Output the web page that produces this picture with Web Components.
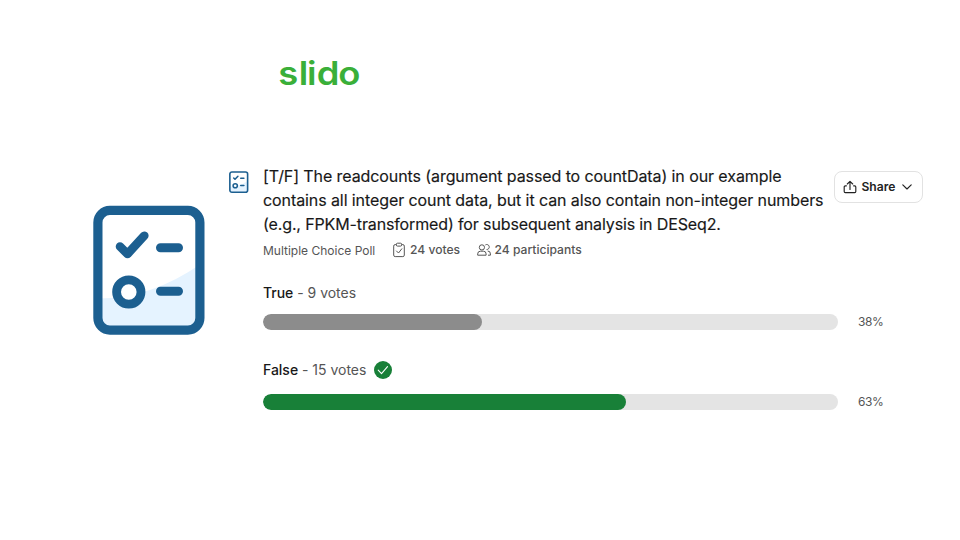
<!DOCTYPE html>
<html lang="en">
<head>
<meta charset="utf-8">
<title>Poll results</title>
<style>
html,body{margin:0;background:#fff}
body{width:960px;height:540px;overflow:hidden;font-family:Inter,"Liberation Sans",sans-serif;color:#181818}
</style>
</head>
<body>
<slide-page>
  <brand-logo slot="logo"></brand-logo>
  <poll-icon slot="art" style="--w:112px;--h:130px"></poll-icon>
  <poll-header slot="head">
    <span>[T/F] The readcounts (argument passed to countData) in our example</span>
    <span slot="l2">contains all integer count data, but it can also contain non-integer numbers</span>
    <span slot="l3">(e.g., FPKM-transformed) for subsequent analysis in DESeq2.</span>
    <poll-meta slot="meta"></poll-meta>
    <share-button slot="action">Share</share-button>
  </poll-header>
  <poll-option votes="9 votes" percent="38%" style="--fill:219px;--c:#8c8c8c">True</poll-option>
  <poll-option votes="15 votes" percent="63%" correct style="--fill:363px;--c:#188038">False</poll-option>
</slide-page>
<script>
const define = (name, html, setup) => customElements.define(name, class extends HTMLElement {
  constructor() {
    super();
    const t = document.createElement('template');
    t.innerHTML = html;
    this.attachShadow({mode: 'open'}).append(t.content.cloneNode(true));
  }
  connectedCallback() { if (setup) setup(this, this.shadowRoot); }
});

define('slide-page', `<style>
:host{display:block;box-sizing:border-box;width:960px;height:540px;background:#fff}
header{height:164px;box-sizing:border-box;padding:54px 0 0 276px}
.body{display:grid;grid-template-columns:136px 1fr;padding-left:93px}
.art{padding-top:41px}
</style>
<header><slot name="logo"></slot></header>
<div class="body"><div class="art"><slot name="art"></slot></div>
<main><slot name="head"></slot><slot></slot></main></div>`);

define('brand-logo', `<style>:host{display:block;height:40px}svg{display:block}</style>
<svg width="90" height="40"><text transform="scale(1.12 1)" x="2.1 20.3 27.8 36.4 55.6" y="31.4" font-size="32.5" font-weight="600" fill="#3aaf39">slido</text></svg>`);

define('poll-icon', `<style>:host{display:block;width:var(--w);height:var(--h)}svg{display:block;width:100%;height:100%}</style>
<svg viewBox="0 -.5 112 130" preserveAspectRatio="none" fill="none" stroke="#1c5f90" stroke-linecap="round" stroke-linejoin="round">
<rect x="5" y="5" width="102" height="120" rx="12" fill="#fff" stroke="none"/>
<path d="M5 93Q58 93 107 59V114a11 11 0 0 1-11 11H16a11 11 0 0 1-11-11Z" fill="#e5f3ff" stroke="none"/>
<rect x="4.9" y="4.9" width="102" height="119.7" rx="12" stroke-width="9.2"/>
<path d="M27 41l7.5 7.5L51.3 30.2" stroke-width="8.6"/>
<path d="M67.5 42.3h18M67.5 85.8h18" stroke-width="9"/>
<circle cx="35.8" cy="86.5" r="12.2" fill="#fff" stroke-width="8.8"/>
</svg>`);

define('poll-header', `<style>
:host{display:flex;height:99px}
.icon{width:34px;padding:7px 0 0 .4px;box-sizing:border-box}
.txt{width:571px}
.title{font-size:16px;line-height:24px;white-space:nowrap;letter-spacing:-.09px;-webkit-text-stroke:.15px #181818}
.title div{height:24px}
.title div:last-child{letter-spacing:-.13px}
.act{padding-top:7px}
</style>
<div class="icon"><poll-icon style="--w:19.5px;--h:22px"></poll-icon></div>
<div class="txt"><div class="title"><div><slot></slot></div><div><slot name="l2"></slot></div><div><slot name="l3"></slot></div></div><slot name="meta"></slot></div>
<div class="act"><slot name="action"></slot></div>`);

define('poll-meta', `<style>
:host{display:flex;align-items:center;height:28px;font-size:12px;color:#555;white-space:nowrap}
.k{width:129px}
.v,.p{display:flex;align-items:center;font-weight:500}
.v{width:84.5px}
svg{width:14px;margin-right:4px;margin-bottom:1px}
b{font-weight:500;font-size:12.1px;margin-bottom:1px}
</style>
<span class="k">Multiple Choice Poll</span>
<span class="v"><svg height="16" viewBox="0 0 14 16" fill="none" stroke="#555" stroke-width="1"><path d="M4.5 2.6H3.2a1.5 1.5 0 0 0-1.5 1.5v9a1.5 1.5 0 0 0 1.5 1.5h7.6a1.5 1.5 0 0 0 1.5-1.5v-9a1.5 1.5 0 0 0-1.5-1.5H9.5"/><rect x="4.3" y="1.2" width="5.4" height="2.9" rx="1.2"/><path d="M4.5 9l2 2 3.3-4.2" stroke-linecap="round"/></svg><b>24 votes</b></span>
<span class="p"><svg height="16" viewBox="0 0 14 16" fill="none" stroke="#555" stroke-width="1" stroke-linejoin="round"><circle cx="4.9" cy="5.4" r="2.6"/><path d="M.7 13.2v-1.3a2.7 2.7 0 0 1 2.7-2.7h3a2.7 2.7 0 0 1 2.7 2.7v1.3ZM8.4 2.9a2.5 2.5 0 1 1 1.2 4.6M10.7 9a2.8 2.8 0 0 1 2.7 2.9v1.3h-2.4"/></svg><b>24 participants</b></span>`);

define('share-button', `<style>
:host{display:flex;align-items:center;box-sizing:border-box;width:89px;height:32px;border:1px solid #e2e2e2;border-radius:8px;padding:0 0 1px 8px;font-size:12.1px;font-weight:600;color:#222}
svg{display:block;fill:none;stroke:#222;stroke-width:1.15;stroke-linecap:round;stroke-linejoin:round}
.u{margin-right:4.5px}.d{margin-left:6.5px}
</style>
<svg class="u" width="14" height="14" viewBox="0 0 14 14"><path d="M3.4 5.8H2.3a1.1 1.1 0 0 0-1.1 1.1v4.6a1.1 1.1 0 0 0 1.1 1.1h9.4a1.1 1.1 0 0 0 1.1-1.1V6.9a1.1 1.1 0 0 0-1.1-1.1h-1.1M7 9.4V1.5M4.3 4L7 1.3 9.7 4"/></svg>
<slot></slot>
<svg class="d" width="10" height="6" viewBox="0 0 10 6"><path d="M.8.8L5 5 9.2.8"/></svg>`);

define('poll-option', `<style>
:host{display:flow-root;box-sizing:border-box;padding-left:34px;height:80px}
.label{display:flex;align-items:center;height:20px;margin-top:20px;font-size:14px;letter-spacing:-.02px;white-space:pre;margin-bottom:11px;color:#555}
.label span,.label strong{padding-bottom:2px}
strong{font-weight:500;color:#181818}
.row{display:flex;align-items:center;height:16px}
.track{width:575px;height:16px;border-radius:8px;background:#e4e4e4;overflow:hidden}
.fill{width:var(--fill);height:16px;border-radius:8px;background:var(--c)}
.pct{margin-left:20px;padding-bottom:2px;font-size:12px;letter-spacing:-.4px;color:#555}
svg{display:none;margin-left:7.8px}
:host([correct]) svg{display:block}
:host([correct]) .label{margin-top:17px;margin-bottom:14px}
</style>
<div class="label"><strong><slot></slot></strong><span> - </span><span class="votes"></span><svg width="18" height="18" viewBox="0 0 18 18"><circle cx="9" cy="9" r="9" fill="#188038"/><path d="M4.2 9.2l3.3 3.4 6-7" fill="none" stroke="#fff" stroke-width="1.1" stroke-linecap="round" stroke-linejoin="round"/></svg></div>
<div class="row"><div class="track"><div class="fill"></div></div><span class="pct"></span></div>`,
(host, root) => {
  root.querySelector('.votes').textContent = host.getAttribute('votes');
  root.querySelector('.pct').textContent = host.getAttribute('percent');
});
</script>
</body>
</html>
